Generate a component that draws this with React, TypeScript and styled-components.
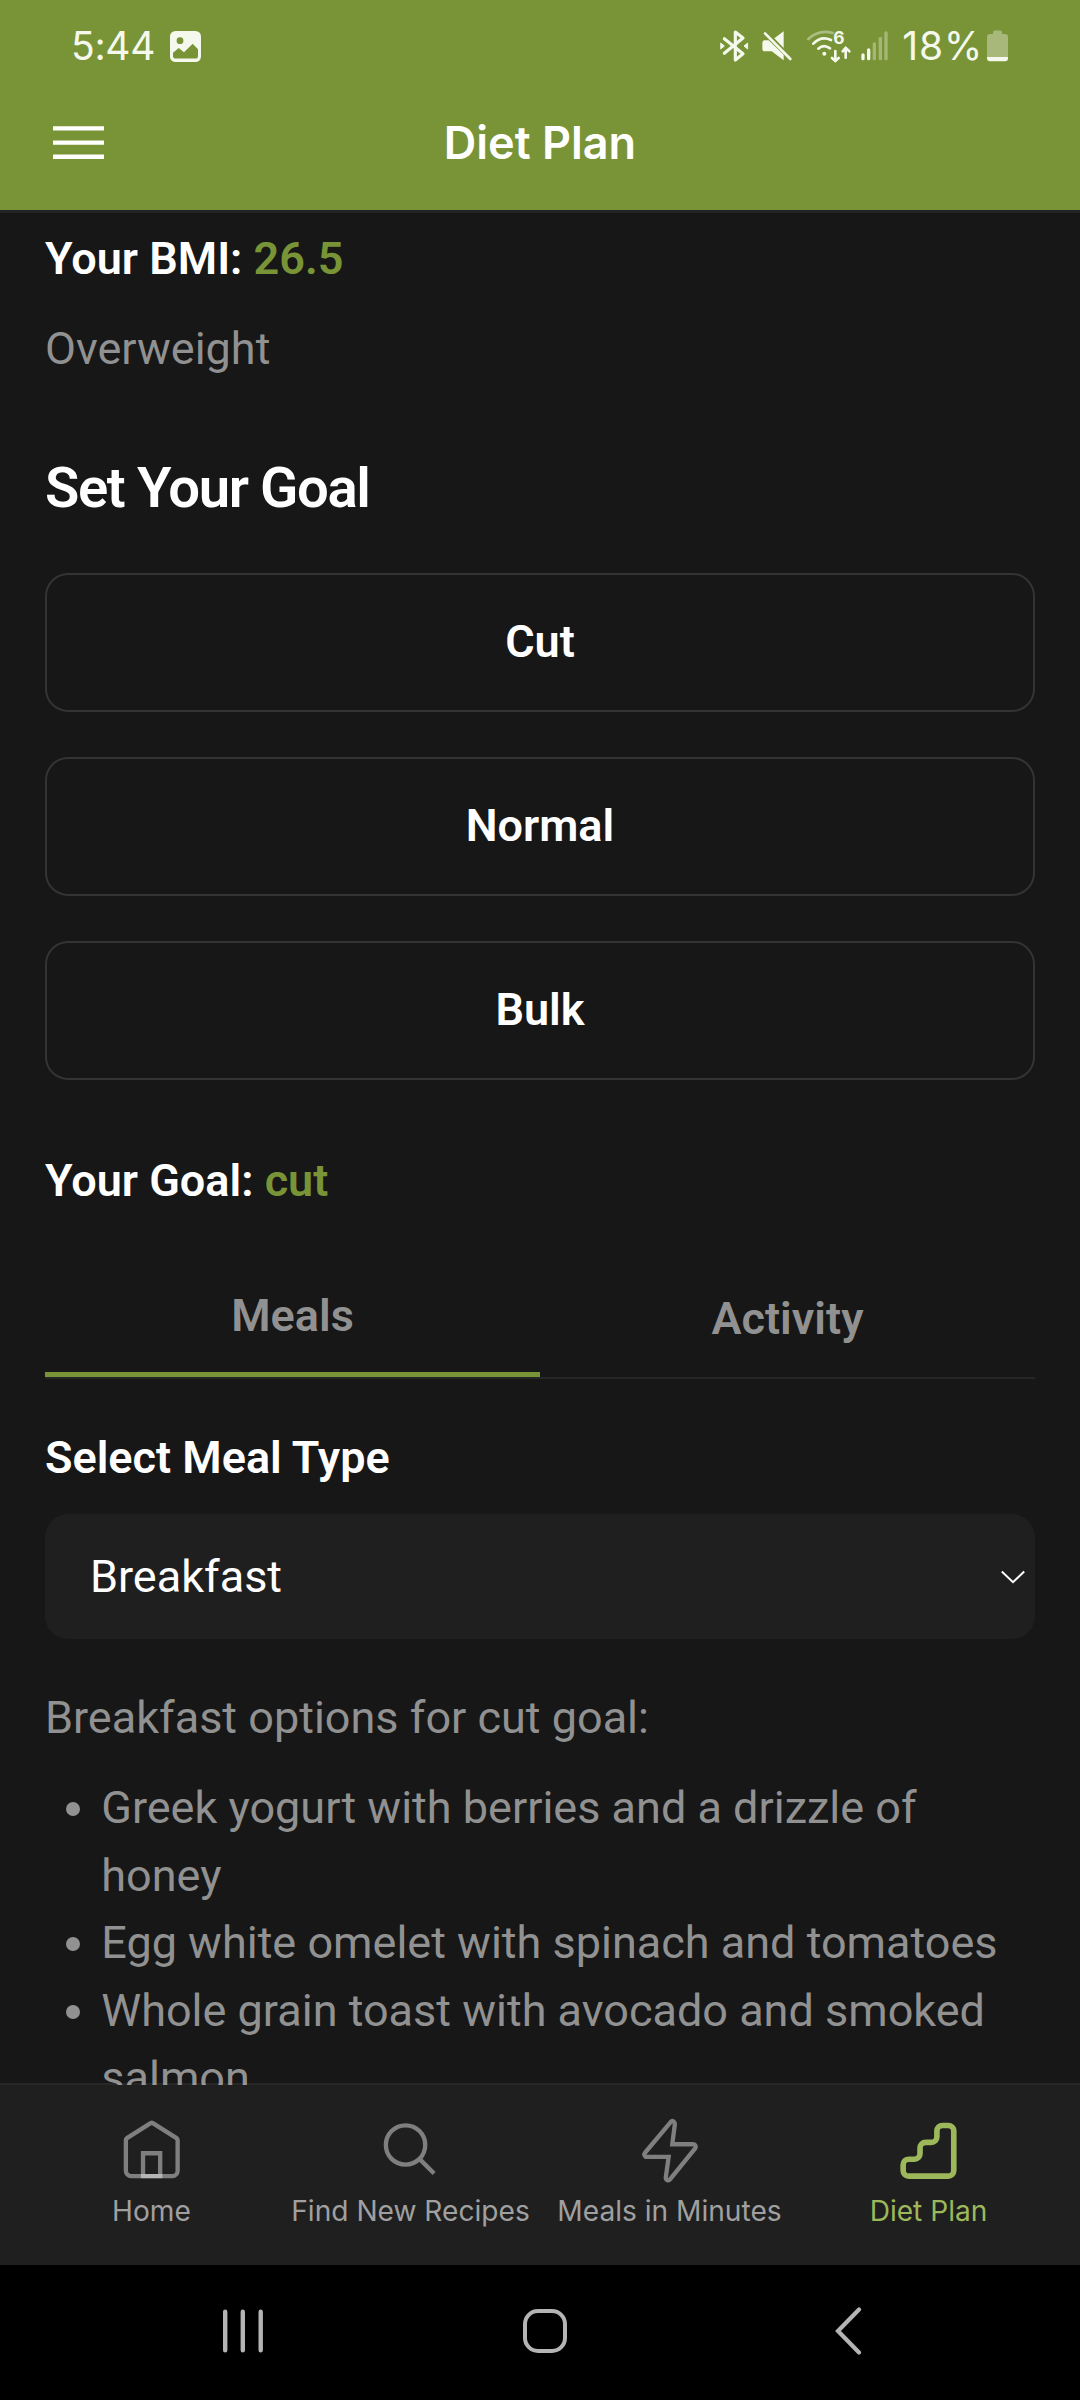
import React, { useState } from 'react';
import styled, { createGlobalStyle } from 'styled-components';

const GlobalStyle = createGlobalStyle`
  * { box-sizing: border-box; margin: 0; padding: 0; }
  body { background: #171717; font-family: Roboto, sans-serif; }
  svg { display: block; flex: none; }
`;

const Screen = styled.div`
  width: 1080px;
  height: 2400px;
  display: flex;
  flex-direction: column;
  overflow: hidden;
  background: #171717;
  color: #fff;
`;

const Header = styled.header`
  height: 213px;
  background: #799437;
  background-clip: padding-box;
  border-bottom: 3px solid #232323;
  flex: none;
`;

const StatusBar = styled.div`
  height: 76px;
  padding: 17px 72px 0 71px;
  display: flex;
  justify-content: space-between;
  color: #f5f8ec;
  font-family: Inter, sans-serif;
  font-size: 39px;
  line-height: 58px;
`;

const StatusGroup = styled.div`
  display: flex;
  height: 58px;
  align-items: center;
`;

const StatusText = styled.span<{ $tracking: number; $gap?: number }>`
  margin-left: ${(p) => p.$gap ?? 0}px;
  letter-spacing: ${(p) => p.$tracking}px;
`;

const StatusIcon = styled.svg<{ $gap: number }>`
  margin-left: ${(p) => p.$gap}px;
  overflow: visible;
`;

const Toolbar = styled.div`
  height: 134px;
  display: grid;
  grid-template-columns: 210px 1fr 210px;
`;

const MenuButton = styled.button`
  border: 0;
  background: none;
  color: #fff;
  padding: 50px 0 0 53px;
  display: flex;
  align-items: flex-start;
`;

const Title = styled.h1`
  text-align: center;
  font: 600 45px/134px Inter, sans-serif;
`;

const Content = styled.main`
  flex: 1;
  min-height: 0;
  overflow: hidden;
  margin-bottom: -2px;
  padding: 12px 45px 0;
`;

const Line = styled.p<{ $strong?: boolean; $gap?: number }>`
  font-size: 45px;
  line-height: 67.5px;
  font-weight: ${(p) => (p.$strong ? 600 : 400)};
  color: ${(p) => (p.$strong ? '#fff' : '#919191')};
  margin-bottom: ${(p) => p.$gap ?? 0}px;
`;

const Accent = styled.span`
  color: #799437;
`;

const Heading = styled.h2`
  font-size: 56.25px;
  line-height: 78.75px;
  font-weight: 600;
  letter-spacing: -1.4px;
  margin-bottom: 45px;
`;

const GoalList = styled.div`
  display: flex;
  flex-direction: column;
  gap: 45px;
  margin-bottom: 67px;
`;

const GoalButton = styled.button`
  height: 139px;
  padding-bottom: 2px;
  border: 2px solid #343434;
  border-radius: 23px;
  background: none;
  color: #fff;
  font: 600 45px/67.5px Roboto, sans-serif;
`;

const Tabs = styled.div`
  display: grid;
  grid-template-columns: 1fr 1fr;
  height: 120px;
  border-bottom: 2px solid #262626;
  margin-bottom: 45px;
`;

const Tab = styled.button<{ $active: boolean }>`
  border: 0;
  border-bottom: ${(p) => (p.$active ? '5px solid #799437' : '0')};
  background: none;
  color: #919191;
  font: 600 45px/67.5px Roboto, sans-serif;
`;

const Select = styled.div`
  height: 125px;
  margin-bottom: 45px;
  padding: 0 10px 0 45px;
  border-radius: 23px;
  background: #1f1f1f;
  display: flex;
  align-items: center;
  justify-content: space-between;
  font-size: 45px;
`;

const MealList = styled.ul`
  padding-left: 56.25px;
  font-size: 45px;
  line-height: 67.5px;
  color: #919191;
`;

const TabBar = styled.nav`
  position: relative;
  flex: none;
  height: 182px;
  padding: 0 22px;
  display: grid;
  grid-template-columns: repeat(4, 1fr);
  background: #1f1f1f;
  background-clip: padding-box;
  border-top: 2px solid rgba(255, 255, 255, 0.07);
`;

const TabItem = styled.a<{ $active?: boolean }>`
  display: flex;
  flex-direction: column;
  align-items: center;
  padding-top: 32px;
  color: ${(p) => (p.$active ? '#9cb85a' : '#a0a0a0')};
  font: 400 28.125px/34px Inter, sans-serif;
  white-space: nowrap;
`;

const TabIcon = styled.svg`
  width: 67.5px;
  height: 67.5px;
  margin-bottom: 9.5px;
  fill: none;
  overflow: visible;
`;

const SystemNav = styled.nav`
  flex: none;
  height: 135px;
  background: #000;
  display: flex;
  justify-content: space-between;
  align-items: center;
  padding: 0 217px 3px 221px;
`;

function StatusIcons() {
  return (
    <>
      <StatusIcon $gap={0} width="28" height="34" viewBox="60 30 84 102" fill="none" stroke="#f5f8ec" strokeWidth="9.5" strokeLinejoin="round" strokeLinecap="round">
        <path d="M73 59 L129 104 L106 123 V39 L129 57 L73 103" />
        <path d="M63 73 L73 81 L63 89 Z M142 73 L132 81 L142 89 Z" fill="#f5f8ec" strokeWidth="3" />
      </StatusIcon>
      <StatusIcon $gap={14.5} width="30" height="34" viewBox="188 30 90 102" fill="#f5f8ec">
        <path d="M225 58 L253 37 V87 Z" />
        <path d="M194 64 H208 L253 107 V124 L217 97 H196 Q189 97 189 89 V72 Q189 66 194 64 Z" />
        <path d="M197 43 L273 120" stroke="#f5f8ec" strokeWidth="8" strokeLinecap="round" />
      </StatusIcon>
      <StatusIcon $gap={15} width="45" height="34" viewBox="322 30 135 102" fill="none" stroke="#f5f8ec" strokeWidth="8" strokeLinecap="round">
        <path d="M326 60 Q358 30 399 42" opacity=".4" />
        <path d="M341 74 Q364 50 394 63 M356 89 Q372 74 391 88" />
        <circle cx="374" cy="104" r="6" fill="#f5f8ec" stroke="none" />
        <path d="M407 96 V125 M397 117 L407 126 L417 117 M438 116 V88 M429 97 L438 87 L449 97" />
        <text x="401" y="75" fontSize="52" fontWeight="700" fontFamily="Inter, sans-serif" fill="#f5f8ec" stroke="none">6</text>
      </StatusIcon>
      <StatusIcon $gap={9} width="28" height="34" viewBox="483 30 84 102" fill="none" stroke="#f5f8ec" strokeWidth="10" strokeLinecap="round">
        <path d="M489 108 V119 M506 93 V119" />
        <path d="M523 75 V119 M541 58 V119 M558 42 V119" opacity=".35" />
      </StatusIcon>
    </>
  );
}

const HomeIcon = () => (
  <TabIcon viewBox="0 0 24 24" stroke="#fff" strokeOpacity=".43" strokeWidth="1.54">
    <path d="M2.8 8.3a1 1 0 0 1 .4-.8L11.6 2.2a.7.7 0 0 1 .8 0L20.8 7.5a1 1 0 0 1 .4.8V19.1a1.9 1.9 0 0 1-1.9 1.9H4.7a1.9 1.9 0 0 1-1.9-1.9Z" />
    <path d="M8.9 21v-8.1h6.1v8.1Z" />
  </TabIcon>
);

const SearchIcon = () => (
  <TabIcon viewBox="0 0 24 24" stroke="#7f7f7f" strokeWidth="1.54">
    <circle cx="10.15" cy="9.95" r="7" />
    <path d="M15.1 14.9l5.2 5.2" />
  </TabIcon>
);

const BoltIcon = () => (
  <TabIcon viewBox="0 0 24 24" stroke="#7f7f7f" strokeWidth="1.54">
    <path d="M12.4 1.7L3.2 12.7a.9.9 0 0 0 .7 1.5h7.7l-1 7.2c-.1 1 .9 1.5 1.5.8l9-11.1a.9.9 0 0 0-.7-1.4h-7.5l.9-7c.1-1-.8-1.7-1.4-1Z" />
  </TabIcon>
);

const StairsIcon = () => (
  <TabIcon viewBox="0 0 24 24" stroke="#9cb85a" strokeWidth="2">
    <path d="M2.9 17a2 2 0 0 1 2-2h2a2 2 0 0 0 2-2v-2a2 2 0 0 1 2-2h2a2 2 0 0 0 2-2V5a2 2 0 0 1 2-2h2a2 2 0 0 1 2 2v14a2 2 0 0 1-2 2h-14a2 2 0 0 1-2-2Z" />
  </TabIcon>
);

const goals = ['Cut', 'Normal', 'Bulk'];
const meals = [
  'Greek yogurt with berries and a drizzle of honey',
  'Egg white omelet with spinach and tomatoes',
  'Whole grain toast with avocado and smoked salmon',
];

export default function App() {
  const [tab, setTab] = useState('Meals');
  return (
    <Screen>
      <GlobalStyle />
      <Header>
        <StatusBar>
          <StatusGroup>
            <StatusText $tracking={-0.3}>5:44</StatusText>
            <StatusIcon $gap={15} width="31" height="31" viewBox="0 0 31 31">
              <rect width="31" height="31" rx="5.5" fill="#f5f8ec" />
              <circle cx="10" cy="9.7" r="3.4" fill="#799437" />
              <path d="M3 21.7 L8.7 17 L14 21.3 L22.7 12.7 L28 18.3 V25 Q28 27.6 25 27.6 H6 Q3 27.6 3 25 Z" fill="#799437" />
            </StatusIcon>
          </StatusGroup>
          <StatusGroup>
            <StatusIcons />
            <StatusText $tracking={0.8} $gap={13}>18%</StatusText>
            <StatusIcon $gap={4} width="21" height="32" viewBox="0 0 21 32">
              <path d="M6 2.5 Q6 .5 8 .5 H13 Q15 .5 15 2.5 V4 H18 Q21 4 21 7 V27 H0 V7 Q0 4 3 4 H6 Z" fill="#a7b87a" />
              <path d="M0 27 H21 V28 Q21 31.3 18 31.3 H3 Q0 31.3 0 28 Z" fill="#f5f8ec" />
            </StatusIcon>
          </StatusGroup>
        </StatusBar>
        <Toolbar>
          <MenuButton aria-label="Menu">
            <svg width="51" height="34" viewBox="0 0 51 34" stroke="#fff" strokeWidth="4.4">
              <path d="M0 2.4 H51 M0 16.6 H51 M0 30.7 H51" />
            </svg>
          </MenuButton>
          <Title>Diet Plan</Title>
        </Toolbar>
      </Header>
      <Content>
        <Line $strong $gap={22.5}>Your BMI: <Accent>26.5</Accent></Line>
        <Line $gap={66.5}>Overweight</Line>
        <Heading>Set Your Goal</Heading>
        <GoalList>
          {goals.map((g) => <GoalButton key={g}>{g}</GoalButton>)}
        </GoalList>
        <Line $strong $gap={45}>Your Goal: <Accent>cut</Accent></Line>
        <Tabs>
          {['Meals', 'Activity'].map((t) => (
            <Tab key={t} $active={t === tab} onClick={() => setTab(t)}>{t}</Tab>
          ))}
        </Tabs>
        <Line $strong $gap={22.5}>Select Meal Type</Line>
        <Select>
          Breakfast
          <svg width="24" height="14" viewBox="0 0 24 14" fill="none" stroke="#fff" strokeWidth="2">
            <path d="M.8 1.5 L12 12.2 L23.2 1.5" />
          </svg>
        </Select>
        <Line $gap={22.5}>Breakfast options for cut goal:</Line>
        <MealList>
          {meals.map((m) => <li key={m}>{m}</li>)}
        </MealList>
      </Content>
      <TabBar>
        <TabItem><HomeIcon />Home</TabItem>
        <TabItem><SearchIcon />Find New Recipes</TabItem>
        <TabItem><BoltIcon />Meals in Minutes</TabItem>
        <TabItem $active><StairsIcon />Diet Plan</TabItem>
      </TabBar>
      <SystemNav>
        <svg width="44" height="48" viewBox="0 0 44 48" stroke="#b4b4b4" strokeWidth="4.4" strokeLinecap="round">
          <path d="M4.2 4.8 V43.3 M21.8 4.8 V43.3 M39.7 4.8 V43.3" />
        </svg>
        <svg width="48" height="48" viewBox="0 0 48 48" fill="none" stroke="#b4b4b4" strokeWidth="4">
          <rect x="4" y="4" width="40" height="40" rx="13" />
        </svg>
        <svg width="38" height="48" viewBox="-8 0 38 48" fill="none" stroke="#b4b4b4" strokeWidth="4.2" strokeLinecap="round">
          <path d="M26 2.5 L5 24 L26 45.5" />
        </svg>
      </SystemNav>
    </Screen>
  );
}
